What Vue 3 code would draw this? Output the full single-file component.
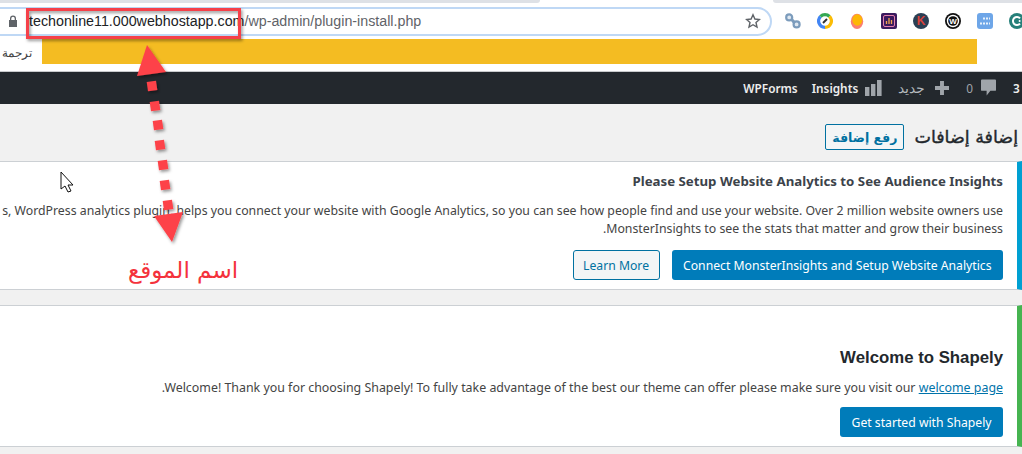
<script setup>
const squares = [
  [152, 86], [155, 106], [158, 125], [160, 145], [163, 165], [165, 185], [168, 205]
]
const squareTransform = ([x, y]) => `translate(${x} ${y}) rotate(-8)`
</script>

<template>
  <div class="page">
    <div class="chrome">
      <div class="tabstrip"><div class="tab-off left"></div><div class="tab-on"></div><div class="tab-off right"></div></div>
      <div class="toolbar">
        <div class="omni">
          <svg class="lock" width="10" height="12" viewBox="0 0 10 12"><path d="M2 5V3.5a3 3 0 0 1 6 0V5h1v7H1V5zm1.3 0h3.4V3.5a1.7 1.7 0 0 0-3.4 0z" fill="#5f6368"/></svg>
          <span class="url"><span class="host">techonline11.000webhostapp.com</span>/wp-admin/plugin-install.php</span>
          <svg class="star" width="16" height="16" viewBox="0 0 16 16"><path d="M8 1.8l1.9 4.2 4.5.5-3.4 3 1 4.5L8 11.7 4 14l1-4.5-3.4-3 4.5-.5z" fill="none" stroke="#5f6368" stroke-width="1.4"/></svg>
        </div>
        <div class="exts">
          <svg width="16" height="16" viewBox="0 0 16 16"><path d="M5 4.5l6 7" stroke="#7c9cbc" stroke-width="3"/><circle cx="4.2" cy="4.4" r="3" fill="#dfe8f1" stroke="#7c9cbc" stroke-width="2.2"/><circle cx="11.6" cy="11.4" r="3" fill="#dfe8f1" stroke="#7c9cbc" stroke-width="2.2"/></svg>
          <svg width="16" height="16" viewBox="0 0 16 16"><circle cx="8" cy="8" r="6.3" fill="#fff"/><path d="M3.5 3.5A6.4 6.4 0 0 0 8 14.4" fill="none" stroke="#4285f4" stroke-width="3.2"/><path d="M3.5 3.5A6.4 6.4 0 0 1 12.5 3.5" fill="none" stroke="#34a853" stroke-width="3.2"/><path d="M12.5 3.5A6.4 6.4 0 0 1 8 14.4" fill="none" stroke="#fbbc05" stroke-width="3.2"/><path d="M6 10l4-4" stroke="#333" stroke-width="2"/></svg>
          <svg width="16" height="16" viewBox="0 0 16 16"><ellipse cx="8" cy="8.4" rx="6.2" ry="7.6" fill="#fb7d72"/><ellipse cx="8.3" cy="7" rx="5" ry="5.8" fill="#fdb705"/></svg>
          <svg width="16" height="16" viewBox="0 0 16 16"><rect width="16" height="16" rx="2" fill="#3a1a5e"/><rect x="2.5" y="2.5" width="11" height="11" rx="1.5" fill="none" stroke="#e57fae"/><path d="M5.5 11V8M8 11V5M10.5 11V7" stroke="#f2a64f" stroke-width="1.3"/></svg>
          <svg width="16" height="16" viewBox="0 0 16 16"><circle cx="8" cy="8" r="8" fill="#2a3f54"/><text x="8" y="12.4" text-anchor="middle" class="ext-k">K</text></svg>
          <svg width="16" height="16" viewBox="0 0 16 16"><circle cx="8" cy="8" r="8" fill="#111"/><circle cx="8" cy="8" r="6.2" fill="#fff"/><circle cx="8" cy="8" r="4.8" fill="#111"/><text x="8" y="11" text-anchor="middle" class="ext-w">W</text></svg>
          <svg width="16" height="16" viewBox="0 0 16 16"><rect width="16" height="16" rx="3" fill="#6ea6e8"/><path d="M6 5.5h7M3 10.5h10" stroke="#e8f2fc" stroke-width="2" stroke-dasharray="2 1"/></svg>
          <svg width="16" height="16" viewBox="0 0 16 16"><circle cx="8" cy="8" r="8" fill="#26807a"/><path d="M11 5.4A4 4 0 1 0 11 10.6" fill="none" stroke="#fff" stroke-width="2"/><circle cx="10.6" cy="8" r="1" fill="#fff"/></svg>
        </div>
      </div>
      <div class="bookmarks">
        <span class="tr">ترجمة</span>
        <div class="banner"></div>
      </div>
    </div>

    <div class="adminbar">
      <span class="ab-item w">WPForms</span>
      <span class="ab-item ins">Insights
        <svg width="17" height="16" viewBox="0 0 17 16"><path d="M0 7h4.4v9H0zM6 4h4.4v12H6zM12 0h4.6v16H12z" fill="#a0a5aa"/></svg>
      </span>
      <span class="ab-item new">جديد
        <svg width="14" height="14" viewBox="0 0 15 15"><path d="M5.4 0h4.2v5.4H15v4.2H9.6V15H5.4V9.6H0V5.4h5.4z" fill="#a0a5aa"/></svg>
      </span>
      <span class="ab-item zero">0
        <svg width="15" height="18" viewBox="0 0 16 18"><path d="M1 0h14a1 1 0 0 1 1 1v10a1 1 0 0 1-1 1h-5l-4 5v-5H1a1 1 0 0 1-1-1V1a1 1 0 0 1 1-1z" fill="#a0a5aa"/></svg>
      </span>
      <span class="ab-item three">3</span>
    </div>

    <div class="heading">
      <button class="upload">رفع إضافة</button>
      <h1>إضافة إضافات</h1>
    </div>

    <section class="notice blue">
      <h2>Please Setup Website Analytics to See Audience Insights</h2>
      <p class="l1">s, WordPress analytics plugin, helps you connect your website with Google Analytics, so you can see how people find and use your website. Over 2 million website owners use</p>
      <p>.MonsterInsights to see the stats that matter and grow their business</p>
      <div class="actions">
        <button class="btn ghost">Learn More</button>
        <button class="btn primary">Connect MonsterInsights and Setup Website Analytics</button>
      </div>
    </section>

    <section class="notice green">
      <h3>Welcome to Shapely</h3>
      <p class="l3">.Welcome! Thank you for choosing Shapely! To fully take advantage of the best our theme can offer please make sure you visit our <a>welcome page</a></p>
      <div class="actions one"><button class="btn primary">Get started with Shapely</button></div>
    </section>

    <svg class="overlay" width="1022" height="454" viewBox="0 0 1022 454">
      <defs>
        <filter id="sh" x="-20%" y="-20%" width="150%" height="150%"><feDropShadow dx="1.5" dy="2" stdDeviation="1.6" flood-color="#000" flood-opacity=".4"/></filter>
      </defs>
      <rect x="27.5" y="9.5" width="212" height="28" fill="none" stroke="#f5414a" stroke-width="3" filter="url(#sh)"/>
      <g filter="url(#sh)" fill="#fd4248">
        <path d="M147 45L166 72 137 76z"/>
        <rect v-for="(s, i) in squares" :key="i" x="-4.7" y="-4.7" width="9.4" height="9.4" :transform="squareTransform(s)"/>
        <path d="M154 216L183 212 172 242z"/>
      </g>
      <text x="183" y="278" class="ar-note" text-anchor="middle">اسم الموقع</text>
      <path d="M61 172v17l4-3 3 6 3-1-3-6h5z" fill="#fff" stroke="#111" stroke-width="1"/>
    </svg>
  </div>
</template>

<style>
html, body { margin: 0; padding: 0; background: #f1f1f1; overflow: hidden; }
</style>

<style scoped>
.page {
  position: relative;
  width: 1022px;
  height: 454px;
  overflow: hidden;
  background: #f1f1f1;
  font-family: "Noto Sans", "Open Sans", sans-serif;
  font-size: 12.3px;
  color: #444;
}
.chrome { background: #fff; height: 72px; box-sizing: border-box; border-bottom: 1px solid #c8cacc; }
.tabstrip { height: 3px; display: flex; }
.tab-off { background: #dee1e6; }
.tab-off.left { width: 540px; border-bottom-right-radius: 3px; }
.tab-on { width: 233px; }
.tab-off.right { flex: 1; border-bottom-left-radius: 3px; }
.toolbar { display: flex; align-items: center; height: 36px; }
.omni {
  box-sizing: border-box;
  flex: none;
  margin-left: -14px;
  width: 786px;
  height: 29px;
  border: 2px solid #bfd8f5;
  border-radius: 15px;
  display: flex;
  align-items: center;
  padding-left: 20px;
  padding-right: 9px;
}
.lock { flex: none; margin-right: 11px; }
.url { font-family: "Liberation Sans", sans-serif; font-size: 14.28px; color: #5f6368; flex: 1; white-space: nowrap; }
.host { color: #202124; }
.exts { display: flex; align-items: center; gap: 16px; margin-left: 13px; flex: none; }
.exts svg { flex: none; }
.ext-k { font-family: "Liberation Sans", sans-serif; font-size: 12px; font-weight: 700; fill: #d8423c; }
.ext-w { font-family: "Liberation Sans", sans-serif; font-size: 8px; font-weight: 700; fill: #fff; }
.bookmarks { display: flex; height: 32px; }
.tr { width: 42px; font-size: 12px; color: #444; padding: 5px 0 0 2px; box-sizing: border-box; }
.banner { width: 935px; height: 25px; background: #f4bc22; }
.adminbar {
  height: 32px;
  background: #23282d;
  display: flex;
  justify-content: flex-end;
  align-items: center;
  color: #eee;
  font-size: 11.8px;
  font-weight: 600;
}
.ab-item { display: flex; align-items: center; white-space: nowrap; }
.w { margin-right: 14px; }
.ins { gap: 7px; margin-right: 16px; }
.new { gap: 10px; color: #b4b9be; margin-right: 17px; font-weight: 400; font-size: 13.5px; }
.zero { gap: 8px; color: #a0a5aa; margin-right: 17px; font-weight: 400; }
.three { color: #eee; width: 9px; overflow: hidden; }
.heading {
  height: 57px;
  box-sizing: border-box;
  display: flex;
  justify-content: flex-end;
  align-items: flex-start;
  padding: 20px 4px 0 0;
  gap: 10px;
}
h1 { margin: 0; font-size: 17.5px; font-weight: 400; -webkit-text-stroke: 0.4px #23282d; color: #23282d; line-height: 26px; font-family: "DejaVu Sans", sans-serif; }
.upload {
  box-sizing: border-box;
  width: 79px;
  height: 26px;
  border: 1px solid #0071a1;
  border-radius: 2px;
  background: #f3f5f6;
  color: #0071a1;
  font-size: 12.5px;
  font-weight: 700;
  font-family: "DejaVu Sans", sans-serif;
  padding: 0;
}
.notice {
  background: #fff;
  box-sizing: border-box;
  border-top: 1px solid #ccd0d4;
  border-bottom: 1px solid #ccd0d4;
  border-right: 5px solid;
  padding-right: 14px;
  display: flex;
  flex-direction: column;
  align-items: flex-end;
  white-space: nowrap;
}
.blue { border-right-color: #00a0d2; height: 129px; padding-top: 11px; margin-bottom: 15px; }
.green { border-right-color: #46b450; height: 142px; padding-top: 42px; }
h2 { margin: 0; font-size: 13.25px; line-height: 16px; color: #3c434a; font-weight: 700; }
p { margin: 0; line-height: 18px; }
.l1 { margin-top: 13px; }
.actions { display: flex; gap: 12px; margin-top: 12px; }
.one { margin-top: 10px; }
.btn {
  box-sizing: border-box;
  height: 30px;
  border-radius: 3px;
  font-family: inherit;
  font-size: 12.2px;
  padding: 0 11.5px;
  white-space: nowrap;
}
.ghost { width: 87px; padding: 0; border: 1px solid #0071a1; background: #f3f5f6; color: #0071a1; }
.primary { border: 0; background: #007cba; color: #fff; }
h3 { margin: 0; font-family: "Liberation Sans", sans-serif; font-size: 16.8px; line-height: 20px; color: #23282d; font-weight: 700; }
.l3 { margin-top: 11px; font-size: 12.4px; }
a { color: #0073aa; text-decoration: underline; }
.overlay { position: absolute; left: 0; top: 0; pointer-events: none; }
.ar-note { font-family: "DejaVu Sans", sans-serif; font-size: 23px; fill: #f4323c; }
</style>
